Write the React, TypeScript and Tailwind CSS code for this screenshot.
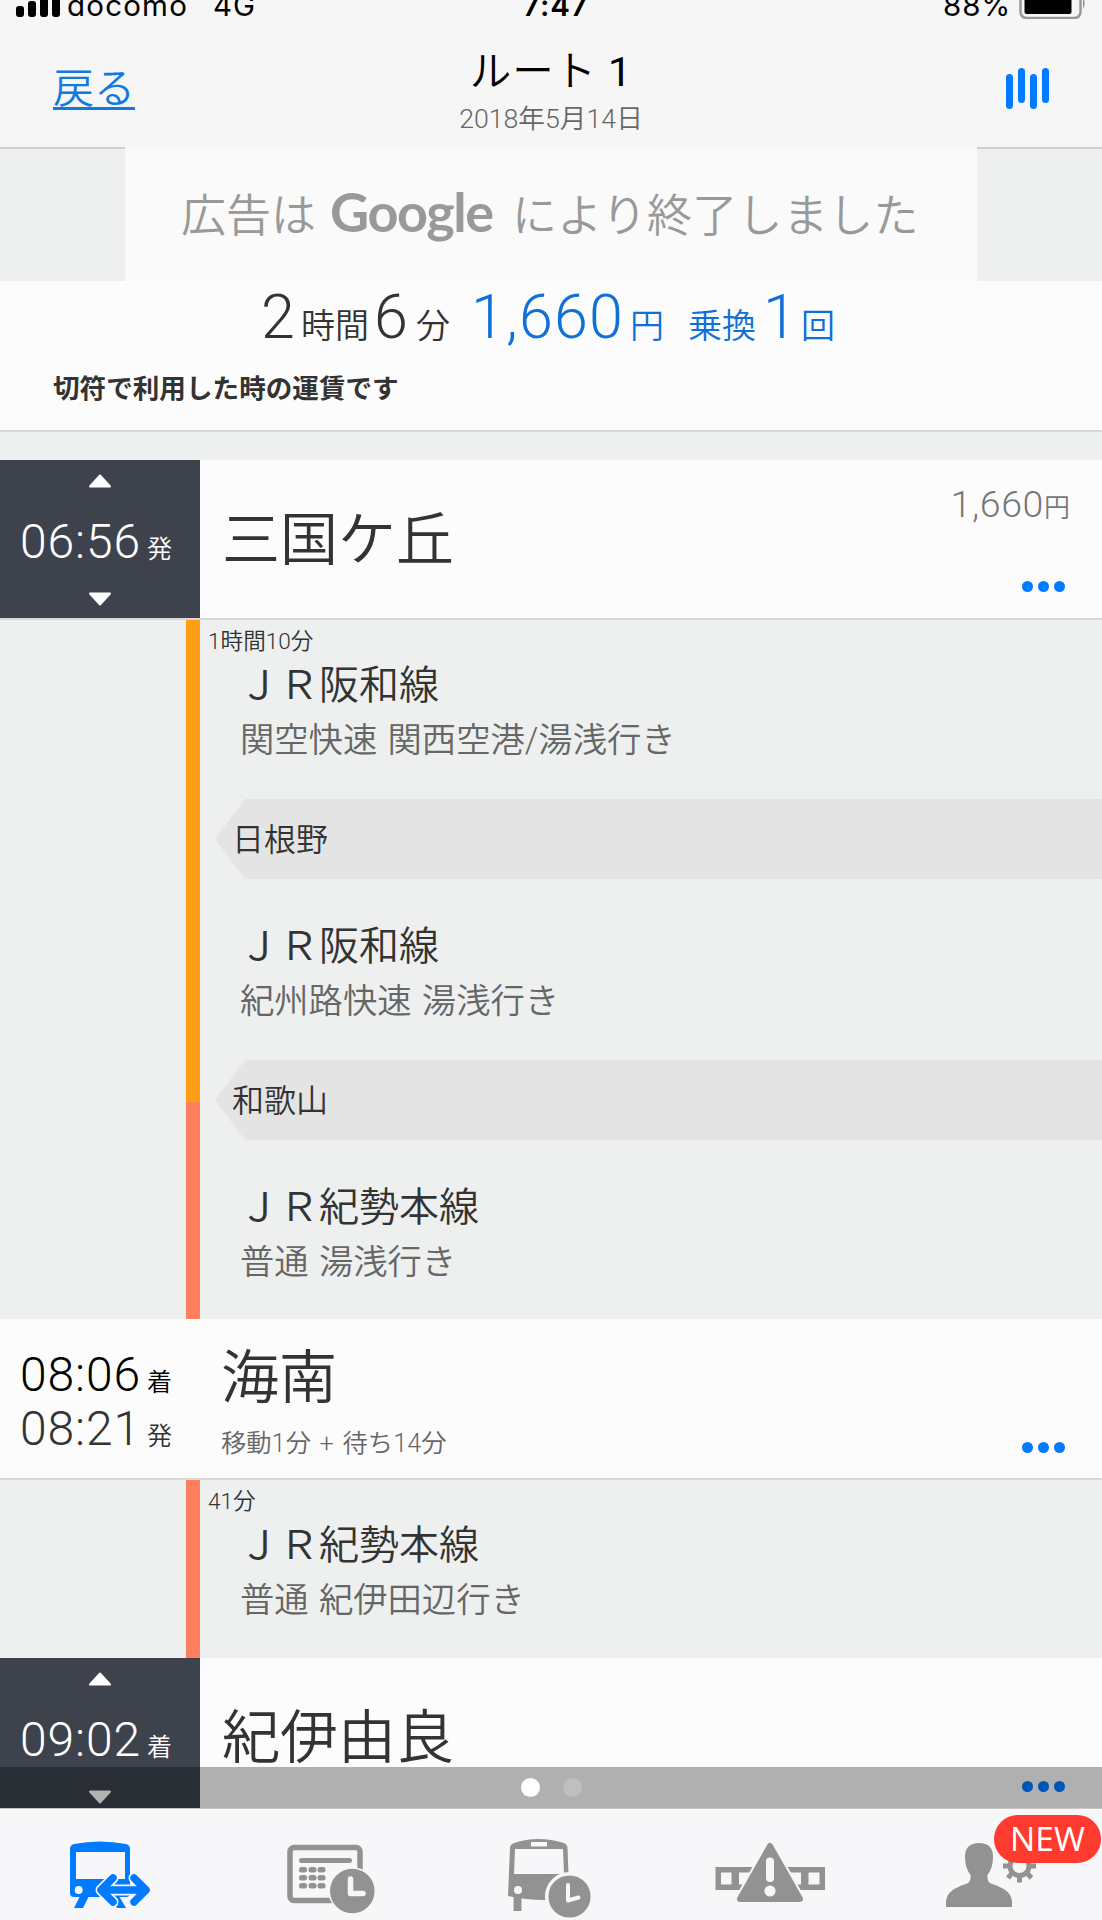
import type { ReactNode } from "react";

const jp = "font-['Roboto','Noto_Sans_CJK_JP',sans-serif]";

const Dots = () => (
  <div className="flex gap-[5px]">
    {[0, 1, 2].map((i) => (
      <span key={i} className="h-[11px] w-[11px] rounded-full bg-[#007aff]" />
    ))}
  </div>
);

const Triangle = ({ down = false }: { down?: boolean }) => (
  <svg width="24" height="14" viewBox="0 0 24 14" className={down ? "rotate-180" : ""}>
    <path
      d="M12 1.5 L22 12.5 H2 Z"
      fill="#fff"
      stroke="#fff"
      strokeWidth="2"
      strokeLinejoin="round"
    />
  </svg>
);

const Time = ({ time, mark }: { time: string; mark: string }) => (
  <div className="flex h-11 items-baseline leading-[44px]">
    <span className="w-[127px] text-[48px] font-light tracking-[0.9px]">{time}</span>
    <span className="text-[25px]">{mark}</span>
  </div>
);

const TimeBox = ({ time, mark }: { time: string; mark: string }) => (
  <div className="flex w-[200px] shrink-0 flex-col bg-[#3d424c] text-white">
    <div className="flex h-[60px] justify-center pt-[14px]">
      <Triangle />
    </div>
    <div className="pl-5">
      <Time time={time} mark={mark} />
    </div>
    <div className="flex justify-center pt-[28px]">
      <Triangle down />
    </div>
  </div>
);

const Leg = ({
  duration,
  line,
  dest,
}: {
  duration?: string;
  line: string;
  dest: string;
}) => (
  <div>
    <div className="h-[42px] pl-2 text-[22.6px] leading-[43px] text-[#333]">{duration}</div>
    <div className="h-[46px] pl-[39px] text-[40px] leading-[48px] text-[#333]">{line}</div>
    <div className="h-[64px] pl-10 text-[34.3px] leading-[65px] text-[#666] [word-spacing:2px]">
      {dest}
    </div>
  </div>
);

const Via = ({ name }: { name: string }) => (
  <div className="ml-[15px] h-20 bg-[#e4e4e4] pl-[17px] text-[32px] leading-[82px] text-[#333] [clip-path:polygon(30px_0,100%_0,100%_100%,30px_100%,0_50%)]">
    {name}
  </div>
);

const Tab = ({ x, color, children }: { x: number; color: string; children: ReactNode }) => (
  <svg className="h-28 w-[220px] shrink-0" viewBox={`${x} 1808 220 112`} fill={color}>
    {children}
  </svg>
);

const TabBar = () => (
  <nav className="relative flex h-28 border-t border-[#c4c6c6] bg-[#f7f7f9]">
    <Tab x={0} color="#007aff">
      <path d="M70 1848 Q70 1844 74 1843 Q100 1838 126 1843 Q130 1844 130 1848 V1892 Q130 1896 126 1896 H74 Q70 1896 70 1892 Z" />
      <path d="M76 1851 H125 V1878 H76 Z" fill="#f7f7f9" />
      <circle cx="78.700" cy="1889" r="4" fill="#f7f7f9" />
      <path d="M80 1895 H89 L83 1907 H74 Z M119 1895 L126 1907 H117 L112 1895 Z" />
      <g
        fill="none"
        stroke="#f7f7f9"
        strokeWidth="11"
        strokeLinecap="round"
        strokeLinejoin="round"
      >
        <path d="M113 1877 L101 1889 L113 1901 M134 1877 L146 1889 L134 1901 M102 1889 H146" />
      </g>
      <g
        fill="none"
        stroke="#007aff"
        strokeWidth="7.500"
        strokeLinecap="round"
        strokeLinejoin="round"
      >
        <path d="M113 1877 L101 1889 L113 1901 M134 1877 L146 1889 L134 1901 M102 1889 H146" />
      </g>
    </Tab>
    <Tab x={220} color="#929292">
      <rect x="290" y="1846.500" width="70" height="53" rx="4" fill="none" stroke="#929292" strokeWidth="5.500" />
      <rect x="299" y="1857" width="53" height="5" rx="2.500" />
      {[1866, 1874, 1882].map((y) =>
        [299, 308.5, 317.5].map((x) => (
          <rect key={`${x}-${y}`} x={x} y={y} width="8" height="5.500" rx="2.500" />
        )),
      )}
      <circle cx="352.300" cy="1890" r="23" stroke="#f7f7f9" strokeWidth="1.500" />
      <path
        d="M350.500 1878 V1892.500 H363"
        fill="none"
        stroke="#f7f7f9"
        strokeWidth="5.500"
        strokeLinecap="round"
        strokeLinejoin="round"
      />
    </Tab>
    <Tab x={440} color="#929292">
      <path d="M510 1847 Q510 1843.500 514 1842 Q538 1834 564 1842 Q567.500 1843.500 567.500 1847 L569.500 1899 H544 Q526 1899 508 1895 Z" />
      <path d="M515 1848 H563 L564 1873 H514 Z M531 1841 H547 V1845.500 H531 Z" fill="#f7f7f9" />
      <circle cx="518" cy="1889" r="4" fill="#f7f7f9" />
      <path d="M513.500 1895 H521.500 V1910 H513.500 Z" />
      <circle cx="569.500" cy="1895.500" r="22.800" stroke="#f7f7f9" strokeWidth="3.500" />
      <path
        d="M568 1884 V1899.500 L578.500 1896.500"
        fill="none"
        stroke="#f7f7f9"
        strokeWidth="4"
        strokeLinecap="round"
        strokeLinejoin="round"
      />
    </Tab>
    <Tab x={660} color="#929292">
      <path d="M715.500 1866 H825 V1889 H715.500 Z" />
      <path
        d="M721 1871.500 H731.500 V1883.500 H721 Z M739 1871.500 H752 V1883.500 H739 Z M788 1871.500 H801 V1883.500 H788 Z M808.500 1871.500 H819.500 V1883.500 H808.500 Z"
        fill="#f7f7f9"
      />
      <path
        d="M770 1845 L800 1898 H740 Z"
        stroke="#f7f7f9"
        strokeWidth="10"
        strokeLinejoin="round"
      />
      <path d="M770 1845 L800 1898 H740 Z" stroke="#929292" strokeWidth="6" strokeLinejoin="round" />
      <path d="M770 1860.500 V1877" stroke="#f7f7f9" strokeWidth="8" strokeLinecap="round" />
      <circle cx="770" cy="1890" r="5.600" fill="#f7f7f9" />
    </Tab>
    <Tab x={880} color="#929292">
      <path d="M979 1842 Q993 1842 993 1856 Q993 1867 987.500 1874 Q986.500 1881 992 1883 Q1012 1889 1012 1901 V1906 H946 V1901 Q946 1889 966 1883 Q971.500 1881 970.500 1874 Q965 1867 965 1856 Q965 1842 979 1842 Z" />
      <g stroke="#929292" strokeWidth="5">
        <circle cx="1019.500" cy="1865" r="9.500" fill="none" />
        <path d="M1003 1865 H1009 M1030 1865 H1036 M1019.500 1875 V1881.500 M1012 1872 L1008 1877 M1027 1872 L1031.500 1877" />
      </g>
    </Tab>
    <span className="absolute top-[6px] right-px h-12 w-[107px] rounded-full bg-[#ff3b30] text-center font-['Open_Sans'] text-[33.5px] leading-[47px] font-normal text-white">
      NEW
    </span>
  </nav>
);

export default function App() {
  return (
    <div className={`flex h-[1920px] w-[1102px] flex-col overflow-hidden bg-[#edf0ef] ${jp} font-[350]`}>
      <header className="flex h-[149px] shrink-0 flex-col border-b-2 border-[#cfcfcf] bg-[#f6f6f6]">
        <div className="flex h-[22px] items-end px-4 font-['Inter'] text-[29.5px] leading-[33px] font-normal text-black">
          <div className="mb-[5px] flex items-end gap-1">
            <i className="h-[11px] w-2 rounded-[3px] bg-black" />
            <i className="h-4 w-2 rounded-[3px] bg-black" />
            <i className="h-[22px] w-2 rounded-[3px] bg-black" />
            <i className="h-[28px] w-2 rounded-[3px] bg-black" />
          </div>
          <span className="ml-[7px] w-[146px] tracking-[1.2px]">docomo</span>
          <span className="w-[310px] tracking-[1px]">4G</span>
          <span className="w-[420px] font-semibold tracking-[0.9px]">7:47</span>
          <span className="w-[76px] tracking-[0.9px]">88%</span>
          <svg width="66" height="30" viewBox="0 0 66 30" className="mb-[3px]">
            <rect x="1.500" y="1" width="60" height="28" rx="6" fill="none" stroke="#999" strokeWidth="2.500" />
            <rect x="5.500" y="4" width="47" height="21" rx="2" />
            <path d="M64 9 Q67.500 14 64 20 Z" fill="#999" />
          </svg>
        </div>
        <div className="flex flex-1 px-[53px]">
          <div className="w-[300px] pt-[38px] text-[41px] leading-[58px] text-[#1279e0]">
            <span className="inline-block h-[50px] border-b-[3px] border-[#1279e0]">戻る</span>
          </div>
          <div className="flex-1 text-center">
            <div className="h-[72px] pt-[18px] text-[41.5px] leading-[63px] tracking-[0.9px] text-black">
              ルート <span className="font-normal">1</span>
            </div>
            <div className="h-8 text-[26.7px] leading-[50px] text-[#666]">2018年5月14日</div>
          </div>
          <div className="flex w-[300px] justify-end gap-[5px] pt-[46px]">
            <i className="mt-[6px] h-[35px] w-[7px] rounded-full bg-[#007aff]" />
            <i className="h-[35px] w-[7px] rounded-full bg-[#007aff]" />
            <i className="mt-[6px] h-[35px] w-[7px] rounded-full bg-[#007aff]" />
            <i className="h-[35px] w-[7px] rounded-full bg-[#007aff]" />
          </div>
        </div>
      </header>

      <div className="-mt-0.5 flex h-[134px] shrink-0 justify-center">
        <div className="z-10 flex w-[852px] items-baseline bg-[#fafafa] pl-14 text-[45px] leading-[129px] whitespace-pre text-[#999]">
          <span className="w-[149px]">広告は</span>
          <span className="w-[182px] font-['Lato'] text-[54px] font-bold tracking-[-1.5px]">Google</span>
          <span className="tracking-[0.3px]">により終了しました</span>
        </div>
      </div>

      <div className="h-[151px] shrink-0 border-b-2 border-[#d9d9d9] bg-[#fcfcfc]">
        <div className="flex h-[76px] items-baseline pl-[261px] text-[34px] leading-[72px] text-[#333] [&_b]:text-[61px] [&_b]:font-light">
          <b className="w-10">2</b>
          <span className="w-[73px]">時間</span>
          <b className="w-[42px]">6</b>
          <span className="w-[55px]">分</span>
          <div className="flex items-baseline text-[#0f70d8]">
            <b className="w-[159px] tracking-[1.2px]">1,660</b>
            <span className="w-[58px]">円</span>
            <span className="w-[75px]">乗換</span>
            <b className="w-[38px]">1</b>
            <span>回</span>
          </div>
        </div>
        <p className="pl-[53px] text-[26.6px] leading-[63px] font-bold text-[#333]">
          切符で利用した時の運賃です
        </p>
      </div>

      <div className="mt-7 flex h-[160px] shrink-0 border-b-2 border-[#d9d9d9] bg-[#fcfcfc]">
        <TimeBox time="06:56" mark="発" />
        <h2 className="flex-1 pl-[22px] text-[58px] leading-[161px] text-[#333]">三国ケ丘</h2>
        <div className="flex flex-col items-end pt-4 pr-8 text-[#777]">
          <div className="h-[105px] text-[26px] leading-[57px]">
            <span className="text-[37.5px] font-light tracking-[0.6px]">1,660</span>円
          </div>
          <div className="pr-[5px]">
            <Dots />
          </div>
        </div>
      </div>

      <div className="flex h-[699px] shrink-0">
        <div className="ml-[186px] flex w-[14px] flex-col">
          <div className="h-[482px] bg-[#ff9f16]" />
          <div className="flex-1 bg-[#ff7f5e]" />
        </div>
        <div className="flex-1">
          <div className="h-[179px]">
            <Leg duration="1時間10分" line="ＪＲ阪和線" dest="関空快速 関西空港/湯浅行き" />
          </div>
          <Via name="日根野" />
          <div className="h-[181px] pt-[2px]">
            <Leg line="ＪＲ阪和線" dest="紀州路快速 湯浅行き" />
          </div>
          <Via name="和歌山" />
          <div className="pt-[2px]">
            <Leg line="ＪＲ紀勢本線" dest="普通 湯浅行き" />
          </div>
        </div>
      </div>

      <div className="flex h-[161px] shrink-0 border-b-2 border-[#d9d9d9] bg-[#fcfcfc]">
        <div className="w-[200px] pt-[34px] pl-5 text-black">
          <Time time="08:06" mark="着" />
          <div className="mt-[10px] text-[#333]">
            <Time time="08:21" mark="発" />
          </div>
        </div>
        <div className="flex-1 pl-[21px]">
          <h2 className="h-[94px] text-[58px] leading-[119px] text-[#333]">海南</h2>
          <p className="text-[25.3px] leading-[61px] text-[#666] [word-spacing:2.5px]">
            移動1分 + 待ち14分
          </p>
        </div>
        <div className="pt-[123px] pr-[37px]">
          <Dots />
        </div>
      </div>

      <div className="flex h-[178px] shrink-0">
        <div className="ml-[186px] w-[14px] bg-[#ff7f5e]" />
        <Leg duration="41分" line="ＪＲ紀勢本線" dest="普通 紀伊田辺行き" />
      </div>

      <div className="relative flex h-[150px] shrink-0 bg-[#fcfcfc]">
        <TimeBox time="09:02" mark="着" />
        <h2 className="flex-1 pl-[22px] text-[58px] leading-[161px] text-[#333]">紀伊由良</h2>
        <div className="pt-[123px] pr-[37px]">
          <Dots />
        </div>
        {/* page indicator */}
        <div className="absolute inset-x-0 bottom-0 flex h-[41px] items-center justify-center gap-[23px] bg-black/30">
          <span className="h-[19px] w-[19px] rounded-full bg-white" />
          <span className="h-[19px] w-[19px] rounded-full bg-[#bfbfbf]" />
        </div>
      </div>

      <TabBar />
    </div>
  );
}
